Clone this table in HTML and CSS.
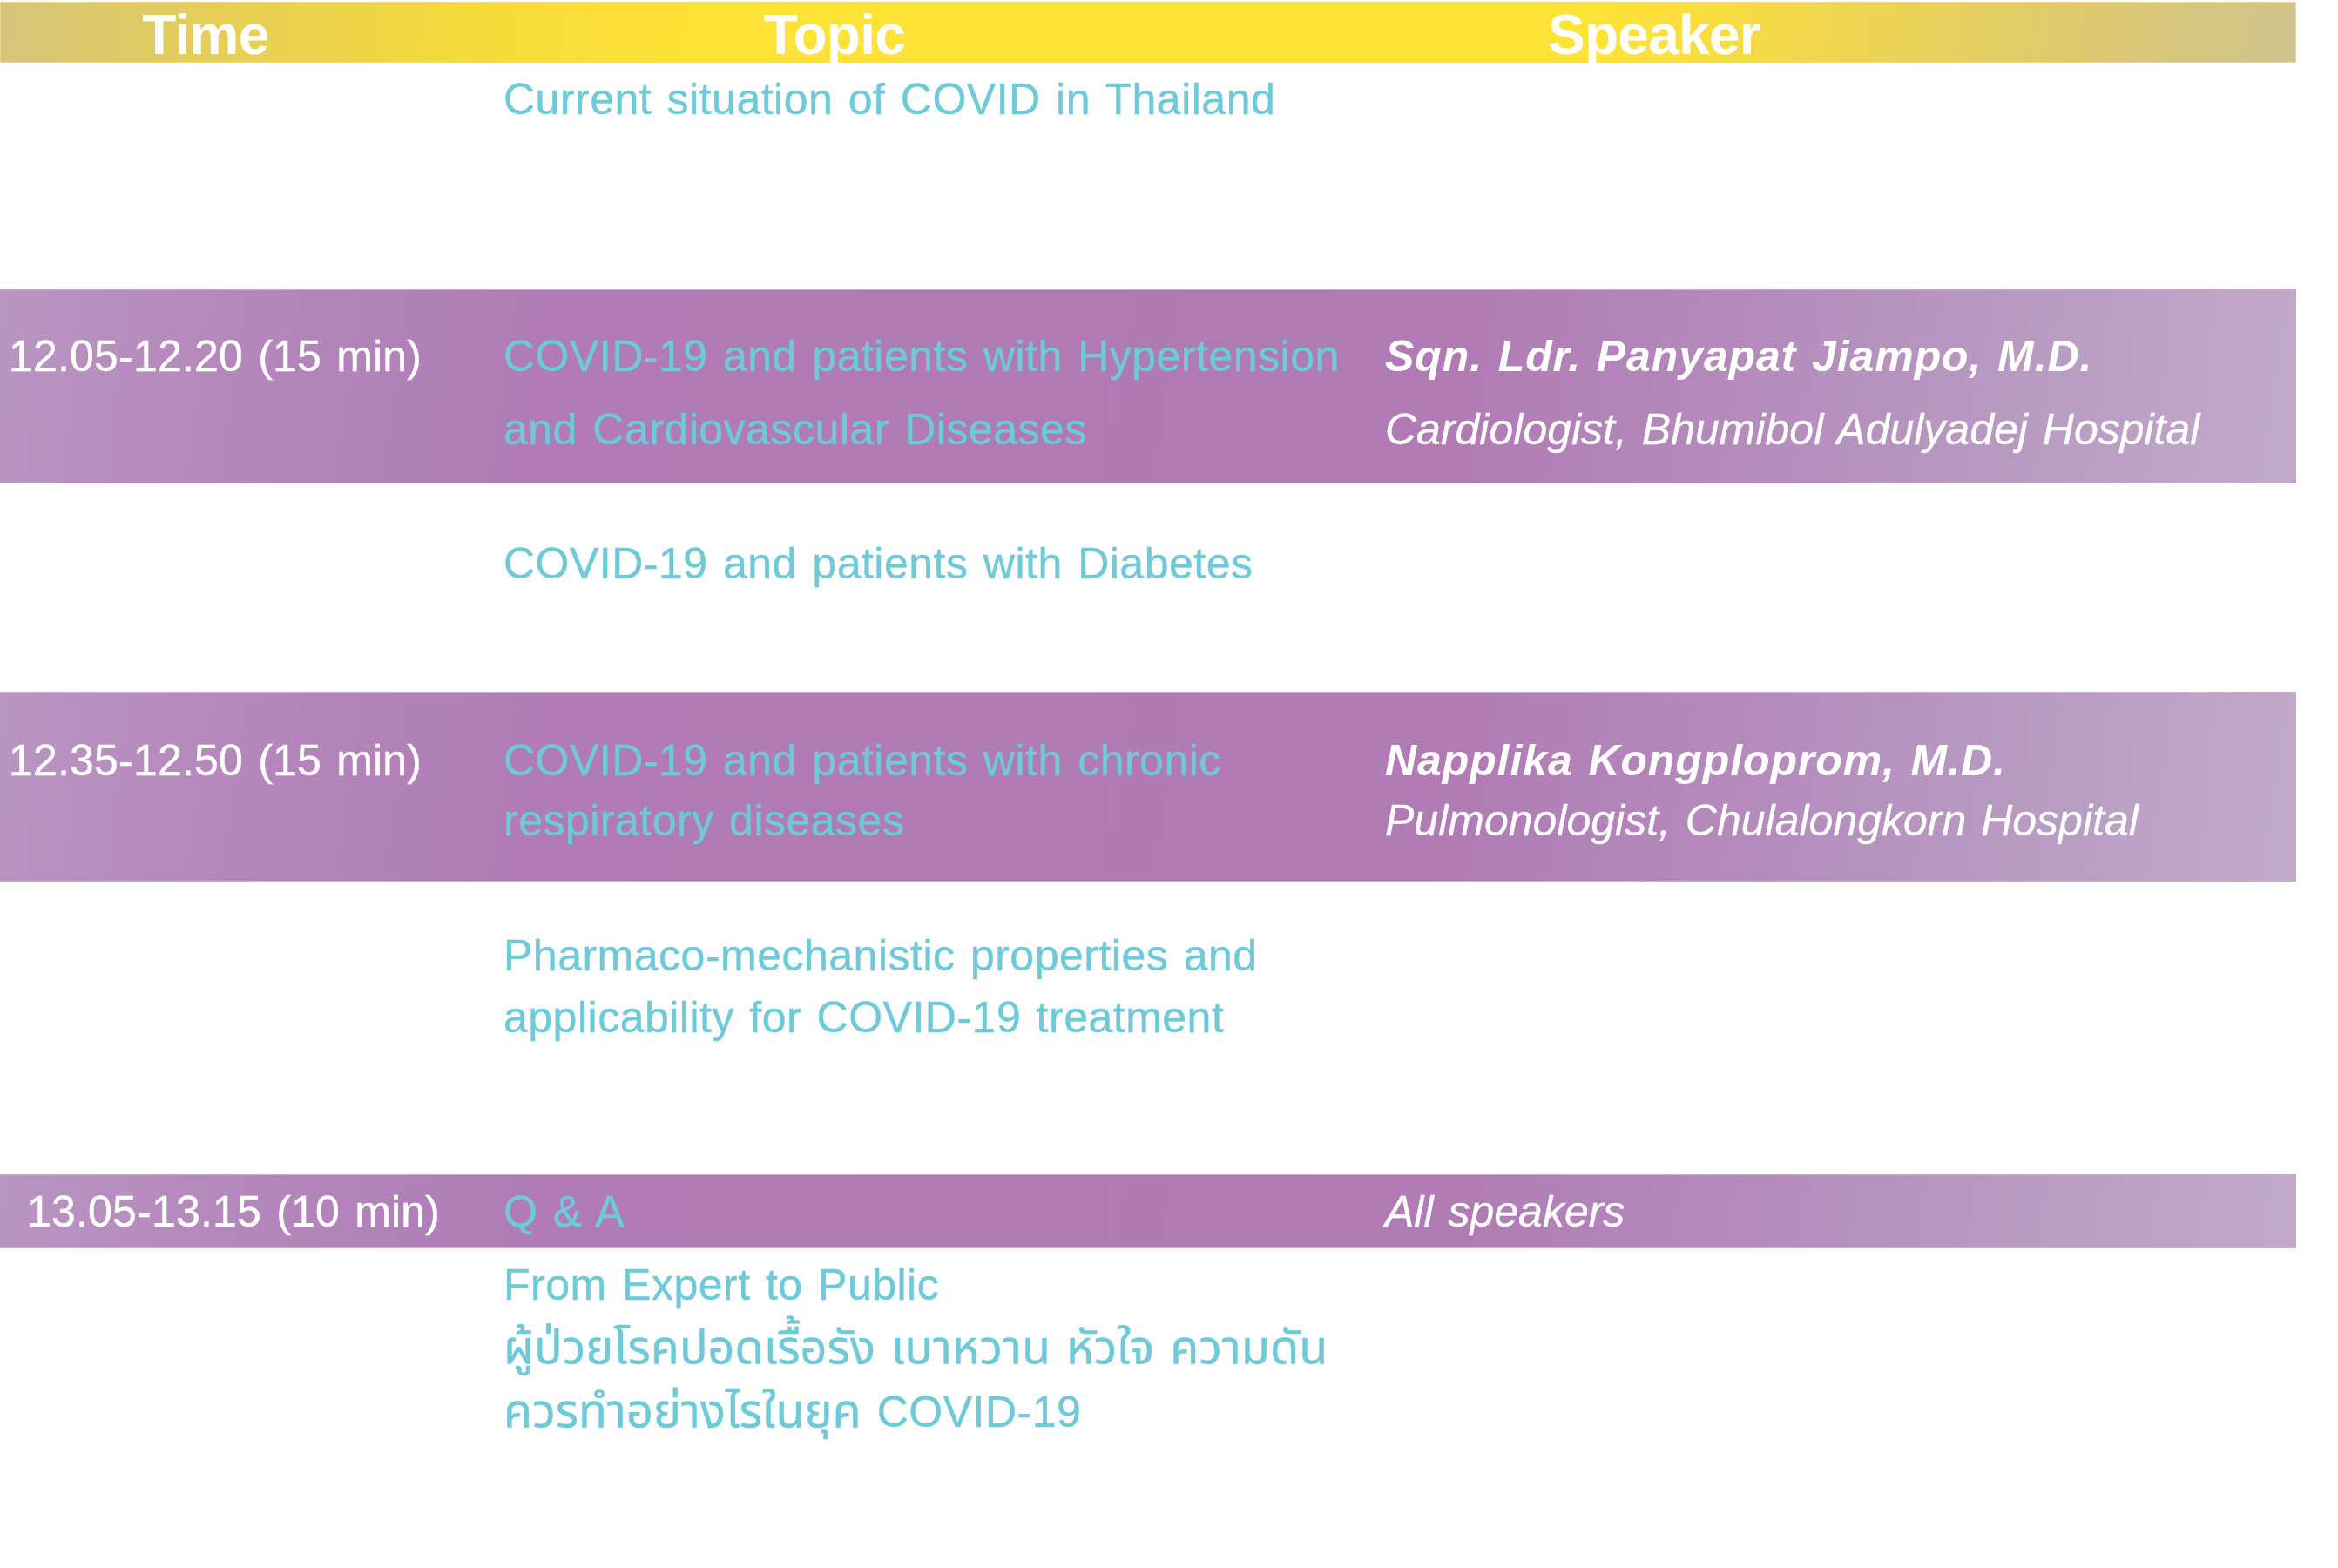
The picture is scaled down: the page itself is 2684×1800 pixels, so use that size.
FILE: index.html
```html
<!DOCTYPE html>
<html lang="en">
<head>
<meta charset="utf-8">
<title>Programme</title>
<link rel="stylesheet" href="styles.css">
</head>
<body>
<div class="schedule">
  <div class="head">
    <div class="h-time">Time</div>
    <div class="h-topic">Topic</div>
    <div class="h-speaker">Speaker</div>
  </div>

  <div class="row r-intro">
    <div class="time"></div>
    <div class="topic">Current situation of COVID in Thailand</div>
    <div class="speaker"></div>
  </div>

  <div class="row band r-b1">
    <div class="time">12.05-12.20 (15 min)</div>
    <div class="topic">COVID-19 and patients with Hypertension<br>and Cardiovascular Diseases</div>
    <div class="speaker"><span class="name">Sqn. Ldr. Panyapat Jiampo, M.D.</span><br><span class="role">Cardiologist, Bhumibol Adulyadej Hospital</span></div>
  </div>

  <div class="row r-w2">
    <div class="time"></div>
    <div class="topic">COVID-19 and patients with Diabetes</div>
    <div class="speaker"></div>
  </div>

  <div class="row band r-b2">
    <div class="time">12.35-12.50 (15 min)</div>
    <div class="topic">COVID-19 and patients with chronic<br>respiratory diseases</div>
    <div class="speaker"><span class="name">Napplika Kongploprom, M.D.</span><br><span class="role">Pulmonologist, Chulalongkorn Hospital</span></div>
  </div>

  <div class="row r-w3">
    <div class="time"></div>
    <div class="topic">Pharmaco-mechanistic properties and<br>applicability for COVID-19 treatment</div>
    <div class="speaker"></div>
  </div>

  <div class="row band r-b3">
    <div class="time">13.05-13.15 (10 min)</div>
    <div class="topic">Q &amp; A</div>
    <div class="speaker"><span class="role">All speakers</span></div>
  </div>

  <div class="row r-w4">
    <div class="time"></div>
    <div class="topic">From Expert to Public<br><span class="thai">ผู้ป่วยโรคปอดเรื้อรัง เบาหวาน หัวใจ ความดัน<br>ควรทำอย่างไรในยุค <span class="latin">COVID-19</span></span></div>
    <div class="speaker"></div>
  </div>
</div>
</body>
</html>
```

FILE: styles.css
```css
html, body {
  margin: 0;
  padding: 0;
  background: #ffffff;
}

body {
  font-family: "Liberation Sans", Arial, "Noto Sans Thai", "Noto Sans", sans-serif;
  padding-top: 2px;
}

.schedule {
  width: 2636px;
  display: flex;
  flex-direction: column;
}

.head {
  height: 70px;
  box-sizing: border-box;
  padding-top: 5px;
  display: grid;
  grid-template-columns: 470px 974px 908px;
  background: linear-gradient(100deg, #d6c47c 0%, #e6cf55 10%, #f5da3c 20%, #ffe236 30%, #ffe236 70%, #ecd455 82%, #dcc774 92%, #cfc48e 100%);
  border: 1px solid #e6d88e;
  border-right-color: #e3d9a6;
}

.head div {
  color: #ffffff;
  font-weight: bold;
  font-size: 64px;
  line-height: 64px;
  letter-spacing: -0.7px;
  text-align: center;
}

.row {
  display: grid;
  grid-template-columns: 578px 1012px 1fr;
  box-sizing: border-box;
  font-size: 50px;
  letter-spacing: 0.5px;
  word-spacing: 3px;
}

.band {
  background: linear-gradient(98deg, #b995c1 0%, #b486bb 12%, #b07bb6 24%, #b07ab5 50%, #b17cb6 64%, #b58ebd 78%, #b99ec3 90%, #c2aacb 100%);
  border-top: 1px solid #c9acd0;
  border-bottom: 1px solid #c9acd0;
}

.time {
  color: #ffffff;
  padding-left: 10px;
  letter-spacing: 0.2px;
  -webkit-text-stroke: 0.4px #ffffff;
}

.topic {
  color: #6ecad9;
  -webkit-text-stroke: 0.4px #6ecad9;
}

.speaker {
  color: #ffffff;
}

.name {
  font-style: italic;
  font-weight: bold;
  letter-spacing: 0.9px;
}

.role {
  font-style: italic;
  letter-spacing: 0;
  -webkit-text-stroke: 0.3px #ffffff;
}

.r-intro {
  height: 260px;
  padding-top: 7px;
  line-height: 70px;
}

.r-b1 {
  height: 223px;
  padding-top: 34px;
  line-height: 84px;
}

.r-w2 {
  height: 239px;
  padding-top: 57px;
  line-height: 70px;
}

.r-b2 {
  height: 218px;
  padding-top: 44px;
  line-height: 69px;
}

.r-w3 {
  height: 336px;
  padding-top: 50px;
  line-height: 71px;
}

.r-b3 {
  height: 85px;
  padding-top: 1px;
  line-height: 83px;
}

.r-b3 .time {
  padding-left: 31px;
}

.r-w4 {
  height: 367px;
  padding-top: 7px;
  line-height: 71px;
}

.thai {
  font-family: "Liberation Sans", "Noto Sans Thai", "Noto Sans Thai UI", "Loma", "Garuda", "Noto Sans", sans-serif;
  font-size: 54px;
  letter-spacing: 0;
}

.latin {
  font-size: 50px;
  letter-spacing: 0.5px;
}
```
